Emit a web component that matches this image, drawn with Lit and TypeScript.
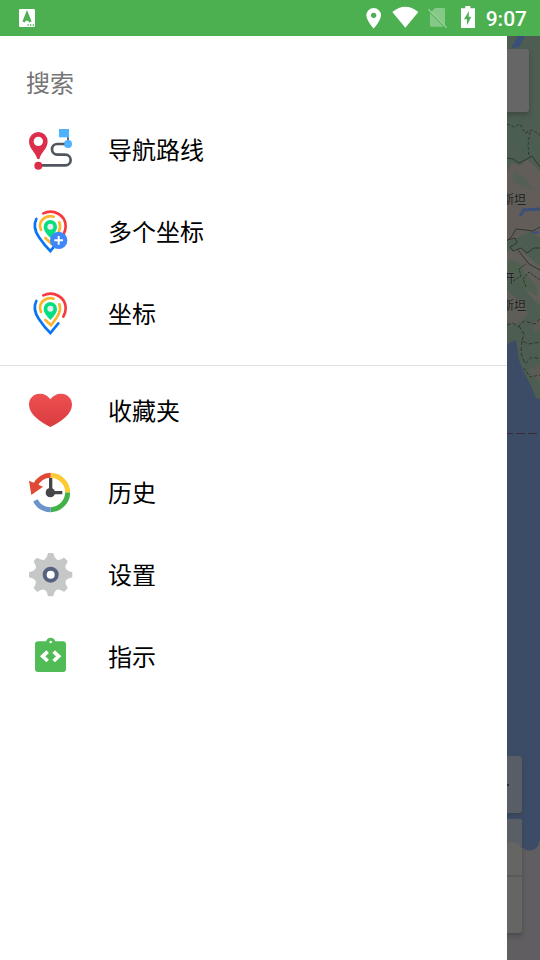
import { LitElement, html, svg, css } from "lit";
import { customElement } from "lit/decorators.js";

const routeIcon = svg`
  <path d="M144 48V70" fill="none" stroke="#505660" stroke-width="5"/>
  <path d="M117 27H147V52H117Z" fill="#4fb2ff"/>
  <circle cx="144" cy="72" r="12" fill="#4fb2ff"/>
  <path d="M133 72H112a15 15 0 0 0 0 32H136a16 16 0 0 1 0 32H64" fill="none" stroke="#505660" stroke-width="8"/>
  <path d="M55 36a28 28 0 0 0-28 28c0 22 18 31 25 53h6c7-22 25-31 25-53a28 28 0 0 0-28-28Z" fill="#dc2d4b"/>
  <circle cx="55" cy="64" r="14" fill="#fff"/>
  <circle cx="55" cy="137" r="12" fill="#dc2d4b"/>`;

const pinIcon = svg`
  <g fill="none" stroke-width="8" stroke-linecap="round">
    <path d="M70 34C100 20 137 38 137 73Q137 86 130 98" stroke="#f83a3f"/>
    <path d="M49 51C39 70 47 91 57 106Q74 131 91 147L115 118" stroke="#0a74f5"/>
    <path d="M101 44C80 38 60 53 60 72L63 84" stroke="#fdb52b"/>
    <path d="M118 61C127 84 108 103 93 124L76 108" stroke="#fdb52b"/>
  </g>
  <path d="M91 54a20 20 0 0 0-20 20c0 12 9 22 20 34c11-12 20-22 20-34a20 20 0 0 0-20-20Z" fill="#05df80"/>
  <circle cx="91" cy="74" r="9" fill="#e8ebed"/>`;

const multiPinIcon = svg`${pinIcon}
  <circle cx="116" cy="115" r="26" fill="#3f86f8"/>
  <path d="M103 115H129M116 102V128" stroke="#fff" stroke-width="6"/>`;

const heartIcon = svg`
  <defs><linearGradient id="heart" x1="0" y1="0" x2="0" y2="1">
    <stop offset="0" stop-color="#ee5052"/><stop offset="1" stop-color="#d93c3f"/>
  </linearGradient></defs>
  <path d="M91 46C84 35 73 29 60 29C40 29 27 43 27 62C27 91 61 113 91 129C122 113 156 91 156 62C156 43 142 29 123 29C110 29 99 35 91 46Z" fill="url(#heart)"/>`;

const historyIcon = svg`
  <g fill="none" stroke-width="15">
    <path d="M92 34A52 52 0 0 1 143 86" stroke="#fdca34"/>
    <path d="M143 86A52 52 0 0 1 92 137" stroke="#42b149"/>
    <path d="M92 137A52 52 0 0 1 46 109" stroke="#6c94cc"/>
    <path d="M92 34A52 52 0 0 0 46 64" stroke="#e04a35"/>
  </g>
  <path d="M27 50L69 68L34 93Z" fill="#e04a35"/>
  <path d="M92 42V86H127" fill="none" stroke="#454648" stroke-width="10"/>
  <circle cx="91" cy="86" r="14" fill="#454648"/>`;

const gearTooth = (angle: number) => svg`
  <path d="M86 24H98Q101 24 101 28Q102 38 112 46H72Q82 38 83 28Q83 24 86 24Z" transform="rotate(${angle} 92 89)"/>`;

const gearIcon = svg`
  <g fill="#c6c8c7"><circle cx="92" cy="89" r="48"/>
    ${[0, 45, 90, 135, 180, 225, 270, 315].map(gearTooth)}</g>
  <circle cx="92" cy="89" r="24" fill="#56607f"/>
  <circle cx="92" cy="89" r="12" fill="#fff"/>`;

const guideIcon = svg`
  <circle cx="92" cy="37" r="14" fill="#51bc56"/>
  <rect x="45" y="34" width="93" height="92" rx="9" fill="#51bc56"/>
  <circle cx="92" cy="36" r="4" fill="#fff"/>
  <path d="M83 65L68 79L83 93M101 65L116 79L101 93" fill="none" stroke="#fff" stroke-width="11"/>`;

const groups = [
  [
    { label: "导航路线", icon: routeIcon, top: 0 },
    { label: "多个坐标", icon: multiPinIcon, top: 0 },
    { label: "坐标", icon: pinIcon, top: 0 },
  ],
  [
    { label: "收藏夹", icon: heartIcon, top: -9 },
    { label: "历史", icon: historyIcon, top: -3 },
    { label: "设置", icon: gearIcon, top: 0 },
    { label: "指示", icon: guideIcon, top: -9 },
  ],
];

@customElement("status-bar")
class StatusBar extends LitElement {
  static styles = css`
    :host {
      display: flex;
      align-items: center;
      justify-content: space-between;
      height: 36px;
      padding: 0 13px 0 19px;
      background: #4caf50;
      color: #fff;
      font: 500 21px/36px Roboto, sans-serif;
    }
    svg { display: block; }
    .right { display: flex; align-items: center; }
    .time { margin-left: 6px; padding-top: 1px; }
  `;
  render() {
    return html`
      <svg width="16" height="18" viewBox="0 0 48 54">
        <rect width="48" height="54" rx="4" fill="#fff"/>
        <path d="M14 39L24 14L34 39M17 31H31" fill="none" stroke="#4caf50" stroke-width="8"/>
        <path d="M25 48H29M33 48H37M41 48H45" stroke="#4caf50" stroke-width="5"/>
      </svg>
      <div class="right">
        <svg width="120" height="36" viewBox="30 0 360 108" fill="#fff">
          <path fill-rule="evenodd" d="M71 24a22 22 0 0 0-22 22c0 16 22 40 22 40s22-24 22-40a22 22 0 0 0-22-22Zm0 14a8 8 0 1 1 0 16a8 8 0 0 1 0-16Z"/>
          <path d="M127 36Q166 5 205 36L166 83Z"/>
          <path opacity=".32" d="M255 24H281a4 4 0 0 1 4 4V76L244 35ZM240 39L281 80H244a4 4 0 0 1-4-4Z"/>
          <path opacity=".4" d="M235 28L290 83" stroke="#fff" stroke-width="4"/>
          <path d="M333 25H346V18H361V25H375V84H333Z"/>
          <path fill="#4caf50" d="M357 33L342 58H351V76L364 50H356Z"/>
        </svg>
        <span class="time">9:07</span>
      </div>`;
  }
}

@customElement("map-backdrop")
class MapBackdrop extends LitElement {
  static styles = css`
    :host { display: block; overflow: hidden; background: #3d4c66; }
    svg { display: block; width: 100%; height: 100%; }
    .label {
      font: 12px "Noto Sans CJK SC", sans-serif;
      fill: #1d1f20;
      stroke: #66645f;
      stroke-width: 1px;
      paint-order: stroke;
      text-anchor: end;
    }
  `;
  render() {
    return html`
      <svg viewBox="507 36 33 924" preserveAspectRatio="xMaxYMin slice">
        <defs>
          <filter id="soft" x="-50%" y="-20%" width="200%" height="140%"><feGaussianBlur stdDeviation="2"/></filter>
        </defs>
        <rect x="507" y="36" width="33" height="924" fill="#3d4c66"/>
        <path d="M507 36H540V399L536 398L531 386L524 372L519 360L516 340L513 341L507 344Z" fill="#4d5d51"/>
        <path d="M507 171L512 163L520 166L527 160L533 164L540 172V238L530 231L516 238L507 242Z" fill="#625d58"/>
        <path d="M507 118L519 117L521 132L535 144L540 162L530 154L519 148L507 140Z" fill="#4a5f51"/>
        <path d="M514 170L526 178L533 190L523 187L512 181Z" fill="#565f54"/>
        <path d="M507 251L520 248L528 256L540 266V306L529 295L519 281L507 276Z" fill="#605f59"/>
        <path d="M509 260L518 262L526 274L537 287V296L526 290L515 280L507 279Z" fill="#50604f"/>
        <path d="M507 290L520 301L528 314L522 321L511 325L507 321Z" fill="#5e5d57"/>
        <path d="M528 370L540 364V382L534 378Z" fill="#5c5c56"/>
        <path d="M532 323L540 319V330L535 332Z" fill="#5b5d54"/>
        <path d="M518 36H525L519 47L511 48Z" fill="#3a4f79"/>
        <path d="M520 216L524 210L540 209" fill="none" stroke="#3b5079" stroke-width="3"/>
        <path d="M532 233L539 232" stroke="#3b5079" stroke-width="2"/>
        <g fill="none" stroke="#303630" stroke-width="1">
          <path d="M507 124L514 127L520 124L525 133L532 130L540 135" stroke-dasharray="3 2"/>
          <path d="M530 132L528 145L529 157" stroke-dasharray="3 2"/>
          <path d="M507 158L513 159L519 163L525 160L532 156L540 167"/>
          <path d="M507 241L512 236L516 229L526 230L533 231L540 227"/>
          <path d="M507 240L515 238L517 243L510 247L513 251L521 248L527 253L534 248L540 248"/>
          <path d="M518 250L525 259L529 264L540 270"/>
          <path d="M513 281L521 276L519 269L526 264" stroke-dasharray="3 1"/>
          <path d="M526 287L523 279L529 272L540 280" stroke-dasharray="3 1"/>
          <path d="M507 325L513 323L518 327L524 321L535 324L540 319" stroke-dasharray="4 2"/>
          <path d="M519 326L524 334L522 341L529 344L540 342" stroke-dasharray="4 2"/>
          <path d="M522 341L521 353L525 364L532 357L540 359" stroke-dasharray="4 2"/>
          <path d="M524 368L530 377L540 375" stroke-dasharray="3 2"/>
        </g>
        <text class="label" x="526" y="204">斯坦</text>
        <text class="label" x="515" y="283">开</text>
        <text class="label" x="526" y="310">斯坦</text>
        <path d="M507 433H513V434H507ZM516 433H525V434H516ZM528 433H537V434H528Z" fill="#3d2a38"/>
        <path d="M507 842L513 842L518 845L523 848Q531 854 538 846L540 840V960H507Z" fill="#605e60"/>
        <path d="M500 52H529V115H500Z" fill="#303832" opacity=".5" filter="url(#soft)"/>
        <rect x="490" y="49" width="39" height="63" rx="3" fill="#666"/>
        <path d="M500 759H522V815H500ZM500 822H522V936H500Z" fill="#32373e" opacity=".5" filter="url(#soft)"/>
        <rect x="490" y="756" width="32" height="57" rx="3" fill="#595d65"/>
        <path d="M505 785H509" stroke="#2d2d2f" stroke-width="2"/>
        <rect x="490" y="819" width="32" height="114" rx="3" fill="#656564"/>
        <path d="M507 819H519Q522 819 522 822V849Q515 839 507 843Z" fill="#5a5f66"/>
        <path d="M507 876H522" stroke="#5a5a5a" stroke-width="2"/>
      </svg>`;
  }
}

@customElement("nav-drawer")
class NavDrawer extends LitElement {
  static styles = css`
    :host {
      display: block;
      background: #fff;
      color: #000;
      font: 24px/36px "Noto Sans CJK SC", sans-serif;
    }
    .search {
      display: block;
      box-sizing: border-box;
      width: 100%;
      height: 73px;
      margin: 0;
      padding: 18px 26px 0;
      border: 0;
      outline: 0;
      background: none;
      color: inherit;
      font: inherit;
    }
    .search::placeholder { color: #757575; opacity: 1; }
    .group { margin: 0; padding: 0 0 10px; list-style: none; }
    .group + .group { padding-top: 4px; border-top: 1px solid #e0e0e0; }
    .item {
      display: flex;
      align-items: center;
      gap: 24px;
      width: 100%;
      height: 82px;
      padding: 0 20px;
      border: 0;
      background: none;
      color: inherit;
      font: inherit;
      text-align: start;
    }
    .icon { flex: none; width: 64px; height: 60px; }
    .name { padding-bottom: 2px; }
  `;
  render() {
    return html`
      <input class="search" type="search" placeholder="搜索" aria-label="搜索">
      <nav>
        ${groups.map((items) => html`
          <ul class="group">
            ${items.map((item) => html`
              <li>
                <button class="item" type="button">
                  <svg class="icon" viewBox="0 ${item.top} 192 180" aria-hidden="true">${item.icon}</svg>
                  <span class="name">${item.label}</span>
                </button>
              </li>`)}
          </ul>`)}
      </nav>`;
  }
}

@customElement("app-root")
class AppRoot extends LitElement {
  static styles = css`
    :host { display: flex; flex-direction: column; min-height: 100vh; }
    .body { display: grid; grid-template-columns: 1fr 33px; flex: 1; }
    .map { min-height: 0; contain: size; }
  `;
  render() {
    return html`
      <status-bar></status-bar>
      <div class="body">
        <nav-drawer></nav-drawer>
        <map-backdrop class="map"></map-backdrop>
      </div>`;
  }
}
